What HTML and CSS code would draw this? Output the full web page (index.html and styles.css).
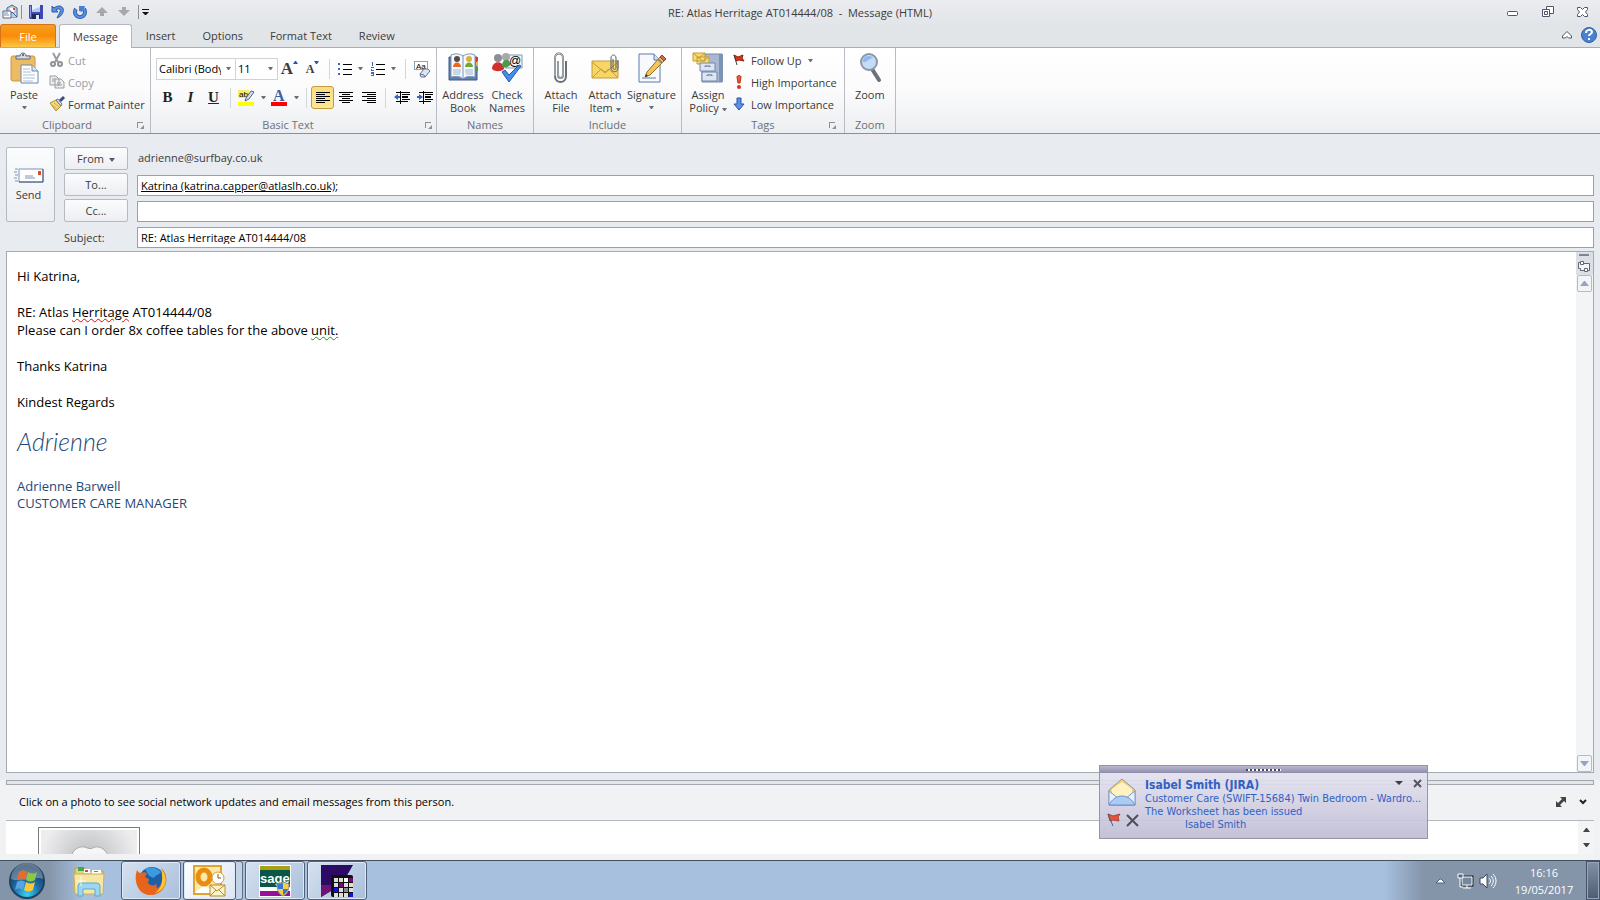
FILE: index.html
```html
<!DOCTYPE html>
<html lang="en">
<head>
    <meta charset="UTF-8">
    <meta name="viewport" content="width=device-width, initial-scale=1.0">
    <title>RE: Atlas Herritage AT014444/08 - Message (HTML)</title>
    <link rel="stylesheet" href="styles.css">
</head>
<body>
    <header class="titlebar">
        <div class="quick">
            <svg class="app-icon" width="16" height="16" viewBox="0 0 16 16"><path d="M5 4l5-3 5 3v9H5z" fill="#dfe9f5" stroke="#3d5d86"/><path d="M7 3h6v6H7z" fill="#fff" stroke="#8ba3c0"/><path d="M5 13l5-5 5 5" fill="#b9cfe8" stroke="#3d5d86"/><path d="M1 7h8v7H1z" fill="#fff" stroke="#56677e"/><path d="M2 9h4M2 11h5" stroke="#6c8db8"/><path d="M11 4h2v2h-2z" fill="#d9533a"/></svg>
            <i class="bar"></i>
            <button class="tool" aria-label="Save"><svg width="14" height="14" viewBox="0 0 14 14"><path d="M0 0h14v14H1l-1-1z" fill="#3f49b5"/><path d="M1 1h1v11H1z" fill="#8f9bf0"/><path d="M3 0h8v7H3z" fill="#e9effb"/><path d="M3 5l8-3v5H3z" fill="#b4c8ec"/><path d="M3 9h8v5H3z" fill="#23285c"/><path d="M7 10h3v4H7z" fill="#dfe4f4"/></svg></button>
            <button class="tool" aria-label="Undo"><svg width="14" height="14" viewBox="0 0 14 14"><path d="M1 1v6h6L5 5c3-2 5-1 4 2l-3 6c7-2 9-12 2-12-2 0-4 1-5 2z" fill="#5c8fdc" stroke="#2b5cb0"/></svg></button>
            <button class="tool" aria-label="Redo"><svg width="14" height="14" viewBox="0 0 14 14"><path d="M3 4a5 5 0 1 0 8 0" fill="none" stroke="#2b5cb0" stroke-width="4"/><path d="M3 4a5 5 0 1 0 8 0" fill="none" stroke="#5c93e2" stroke-width="2"/><path d="M6 1h6l-1 3-2 3-3-1z" fill="#4a80d2"/></svg></button>
            <button class="tool" aria-label="Previous item"><svg width="12" height="10" viewBox="0 0 12 10"><path d="M6 0l6 6H8v3H4V6H0z" fill="#a5a8ad"/></svg></button>
            <button class="tool" aria-label="Next item"><svg width="12" height="10" viewBox="0 0 12 10"><path d="M6 9l6-6H8V0H4v3H0z" fill="#a5a8ad"/></svg></button>
            <i class="bar"></i>
            <button class="tool narrow" aria-label="Customize toolbar"><svg width="7" height="7" viewBox="0 0 7 7"><path d="M0 0h7v1H0zM0 3h7L4 6H3z" fill="#111"/></svg></button>
        </div>
        <h1 class="title">RE: Atlas Herritage AT014444/08 &nbsp;-&nbsp; Message (HTML)</h1>
        <div class="window-buttons">
            <button aria-label="Minimize"><svg width="12" height="12" viewBox="0 0 12 12"><rect x=".5" y="5.500" width="10" height="4" rx="1" fill="#fff" stroke="#50566a"/></svg></button>
            <button aria-label="Restore"><svg width="12" height="12" viewBox="0 0 12 12"><path d="M4.500.500h7v7h-7z" fill="#fff" stroke="#50566a"/><path d="M.500 3.500h7v7h-7z" fill="#fff" stroke="#50566a"/><path d="M2.500 5.500h3v3h-3z" fill="#fff" stroke="#50566a"/></svg></button>
            <button aria-label="Close"><svg width="12" height="12" viewBox="0 0 12 12"><path d="M.500 1.500h3l2 2 2-2h3v2l-2 2.500 2 2.500v2h-3l-2-2-2 2h-3v-2l2-2.500-2-2.500z" fill="#fff" stroke="#50566a"/></svg></button>
        </div>
    </header>

    <nav class="tabs">
        <button class="tab file">File</button>
        <button class="tab active">Message</button>
        <button class="tab">Insert</button>
        <button class="tab">Options</button>
        <button class="tab">Format Text</button>
        <button class="tab">Review</button>
        <div class="tab-tools">
            <button class="tool" aria-label="Minimize the ribbon"><svg width="10" height="8" viewBox="0 0 10 8"><path d="M5 .500L9.500 5v2H6.500L5 5.500 3.500 7H.500V5z" fill="#fff" stroke="#50566a"/></svg></button>
            <button class="tool" aria-label="Help"><svg width="16" height="16" viewBox="0 0 16 16"><circle cx="8" cy="8" r="7.500" fill="#4a82d0" stroke="#2f5fae"/><path d="M5 6c0-4 6-4 6-1 0 2-3 2-3 4M8 11v2" fill="none" stroke="#fff" stroke-width="2"/></svg></button>
        </div>
    </nav>

    <section class="ribbon">
        <div class="group clipboard">
            <div class="group-body">
                <button class="big">
                    <svg width="32" height="32" viewBox="0 0 32 32"><rect x="3" y="4" width="24" height="25" rx="2" fill="#edbb63" stroke="#c8954a"/><path d="M8 7V4h4c0-4 6-4 6 0h4v3z" fill="#d5dae0" stroke="#5f6874"/><circle cx="15" cy="3" r="1" fill="#4a515c"/><path d="M13 13h11l6 6v12H13z" fill="#fff" stroke="#6a86b2"/><path d="M24 13v6h6" fill="#dbe5f3" stroke="#6a86b2"/><path d="M15 17h7M15 20h8M15 23h12M15 26h12M15 29h10" stroke="#a9bcd8"/></svg>
                    <span>Paste</span>
                    <svg class="arrow" width="5" height="3"><path d="M0 0h5L3 3H2z"/></svg>
                </button>
                <div class="small-list">
                    <button class="small" disabled><svg width="16" height="16" viewBox="0 0 16 16"><path d="M4 1l5 9M11 1L6 10" stroke="#9a9da2" stroke-width="2"/><circle cx="4" cy="12" r="2" fill="none" stroke="#8e9196" stroke-width="2"/><circle cx="11" cy="12" r="2" fill="none" stroke="#8e9196" stroke-width="2"/></svg>Cut</button>
                    <button class="small" disabled><svg width="16" height="16" viewBox="0 0 16 16"><path d="M1 2h6l3 3v6H1zM6 5h6l3 3v6H6z" fill="#eceef0" stroke="#9a9da2"/><path d="M3 5h3M3 7h3M8 9h4M8 11h5" stroke="#9a9da2"/></svg>Copy</button>
                    <button class="small"><svg width="16" height="16" viewBox="0 0 16 16"><path d="M1 7l6-3 5 6-5 5z" fill="#f4dc7c" stroke="#b08a32"/><path d="M3 9l5 4M5 7l5 4" stroke="#caa548"/><path d="M7 4l2-1 4 5-1 2z" fill="#dfe4ec" stroke="#6a7180"/><path d="M11 5l4-4" stroke="#3d4a86" stroke-width="3"/></svg>Format Painter</button>
                </div>
            </div>
            <div class="group-name">Clipboard<button class="launcher" aria-label="Clipboard options"><svg width="7" height="7"><path d="M0 0h6v1H1v5H0zM3 3l3 3M7 3v4H3z" fill="#8a8f98"/></svg></button></div>
        </div>

        <div class="group basic">
            <div class="group-body stacked">
                <div class="row">
                    <label class="combo font"><select aria-label="Font"><option>Calibri (Body)</option></select><svg class="arrow" width="5" height="3"><path d="M0 0h5L3 3H2z"/></svg></label>
                    <label class="combo size"><select aria-label="Font size"><option>11</option></select><svg class="arrow" width="5" height="3"><path d="M0 0h5L3 3H2z"/></svg></label>
                    <button class="tool grow" aria-label="Grow font"><span>A</span><svg width="5" height="3"><path d="M0 3h5L3 0H2z" fill="#2f55a0"/></svg></button>
                    <button class="tool shrink" aria-label="Shrink font"><span>A</span><svg width="5" height="3"><path d="M0 0h5L3 3H2z" fill="#2f55a0"/></svg></button>
                    <i class="sep"></i>
                    <button class="tool split" aria-label="Bullets"><svg width="14" height="14" viewBox="0 0 14 14"><path d="M0 1h2v2H0zM0 6h2v2H0zM0 11h2v2H0z" fill="#3d68b8"/><path d="M5 2h9v1H5zM5 7h9v1H5zM5 12h9v1H5z"/></svg><svg class="arrow" width="5" height="3"><path d="M0 0h5L3 3H2z"/></svg></button>
                    <button class="tool split" aria-label="Numbering"><svg width="14" height="14" viewBox="0 0 14 14"><path d="M1 0h1v4H1zM0 5h3v1H2v1H1v1h2v1H0V7h2V6H0zM0 10h3v4H0v-1h2v-1H0z" fill="#3d68b8"/><path d="M5 2h9v1H5zM5 7h9v1H5zM5 12h9v1H5z"/></svg><svg class="arrow" width="5" height="3"><path d="M0 0h5L3 3H2z"/></svg></button>
                    <i class="sep"></i>
                    <button class="tool" aria-label="Clear formatting"><svg width="16" height="16" viewBox="0 0 16 16"><rect x=".5" y=".5" width="13" height="8" fill="#fff" stroke="#8fa3c2"/><text x="2" y="8" class="ico-text">Aa</text><path d="M6 13l4-5h4l2 2-5 6H7z" fill="#dde6f4" stroke="#5f7396"/><path d="M6 13l4 1 1 2" fill="none" stroke="#5f7396"/></svg></button>
                </div>
                <div class="row">
                    <button class="tool letter b">B</button>
                    <button class="tool letter i">I</button>
                    <button class="tool letter u">U</button>
                    <i class="sep"></i>
                    <button class="tool split" aria-label="Highlight"><svg width="17" height="17" viewBox="0 0 17 17"><path d="M0 1h11v8H0z" fill="#f5f06a"/><text x="1" y="8" class="ico-text">ab</text><path d="M8 9l5-7 3 1-5 7-4 2z" fill="#cfdcf0" stroke="#47679c"/><path d="M0 13h16v4H0z" fill="#ff0"/></svg><svg class="arrow" width="5" height="3"><path d="M0 0h5L3 3H2z"/></svg></button>
                    <button class="tool split" aria-label="Font color"><svg width="17" height="17" viewBox="0 0 17 17"><text x="2" y="12" class="ico-a">A</text><path d="M0 13h16v4H0z" fill="#f00"/></svg><svg class="arrow" width="5" height="3"><path d="M0 0h5L3 3H2z"/></svg></button>
                    <i class="sep"></i>
                    <button class="tool on" aria-label="Align left"><svg width="14" height="11"><path d="M0 0h14v1H0zM0 2h9v1H0zM0 4h14v1H0zM0 6h9v1H0zM0 8h14v1H0zM0 10h9v1H0z"/></svg></button>
                    <button class="tool" aria-label="Center"><svg width="14" height="11"><path d="M0 0h14v1H0zM3 2h8v1H3zM0 4h14v1H0zM3 6h8v1H3zM0 8h14v1H0zM3 10h8v1H3z"/></svg></button>
                    <button class="tool" aria-label="Align right"><svg width="14" height="11"><path d="M0 0h14v1H0zM5 2h9v1H5zM0 4h14v1H0zM5 6h9v1H5zM0 8h14v1H0zM5 10h9v1H5z"/></svg></button>
                    <i class="sep"></i>
                    <button class="tool" aria-label="Decrease indent"><svg width="16" height="13"><path d="M2 1h14v1H2zM8 3h8v1H8zM8 5h6v2H8zM8 8h8v1H8zM2 10h12v1H2zM6 0h1v13H6z"/><path d="M0 6l4-3v2h2v2H4v2z" fill="#3566b8"/></svg></button>
                    <button class="tool" aria-label="Increase indent"><svg width="16" height="13"><path d="M2 1h14v1H2zM8 3h8v1H8zM8 5h6v2H8zM8 8h8v1H8zM2 10h12v1H2zM6 0h1v13H6z"/><path d="M6 6L2 3v2H0v2h2v2z" fill="#3566b8"/></svg></button>
                </div>
            </div>
            <div class="group-name">Basic Text<button class="launcher" aria-label="Text options"><svg width="7" height="7"><path d="M0 0h6v1H1v5H0zM3 3l3 3M7 3v4H3z" fill="#8a8f98"/></svg></button></div>
        </div>

        <div class="group">
            <div class="group-body">
                <button class="big">
                    <svg width="32" height="32" viewBox="0 0 32 32"><path d="M2 5h28v23H2z" fill="#5f7fae" stroke="#3f5b86"/><path d="M4 3c5-2 9-1 12 1 3-2 7-3 12-1v22c-5-1-9-1-12 2-3-3-7-3-12-2z" fill="#f5f8fc" stroke="#7a93b8"/><path d="M16 4v23" stroke="#7a93b8"/><path d="M29 5h2v4h-2z" fill="#d33"/><path d="M29 10h2v4h-2z" fill="#e8b43c"/><path d="M29 15h2v4h-2z" fill="#4a9a3c"/><circle cx="10" cy="7" r="3" fill="#5a4a44"/><path d="M6 15c0-6 8-6 8 0z" fill="#e56a24"/><circle cx="22" cy="7" r="3" fill="#d8b23c"/><path d="M18 15c0-6 8-6 8 0z" fill="#6aa83a"/><path d="M6 18h8M6 20h8M6 22h7M18 18h8M18 20h8M19 22h7" stroke="#9fb2cf"/></svg>
                    <span>Address<br>Book</span>
                </button>
                <button class="big">
                    <svg width="32" height="32" viewBox="0 0 32 32"><path d="M14 3h17v13H14z" fill="#f4f7fb" stroke="#8096b8"/><circle cx="7" cy="6" r="4" fill="#8c8f96"/><path d="M1 17c0-9 12-9 12 0-3 3-9 3-12 0z" fill="#cf3030"/><circle cx="15" cy="5" r="4" fill="#a5a8ad"/><path d="M11 14c0-8 9-8 8-1-2 3-6 3-8 1z" fill="#4b9a48"/><text x="18" y="13" class="ico-at">@</text><path d="M11 20l3-2 4 5L28 13l2 1-12 16z" fill="#4b8ce6" stroke="#2359b4"/></svg>
                    <span>Check<br>Names</span>
                </button>
            </div>
            <div class="group-name">Names</div>
        </div>

        <div class="group wide">
            <div class="group-body">
                <button class="big">
                    <svg width="32" height="32" viewBox="0 0 32 32"><path d="M13 9v14c0 4 5 4 5 0V6c0-6-8-6-8 0v18c0 8 11 8 11 0V9" fill="none" stroke="#6a6f77" stroke-width="2"/><path d="M13 9v14c0 4 5 4 5 0V6c0-6-8-6-8 0v18" fill="none" stroke="#c5c9cf" stroke-width="1"/></svg>
                    <span>Attach<br>File</span>
                </button>
                <button class="big">
                    <svg width="32" height="32" viewBox="0 0 32 32"><path d="M3 9h26v17H3z" fill="#f8d567" stroke="#c79a35"/><path d="M3 26l9-9 4 3 4-3 9 9M3 10l13 11 13-11" fill="none" stroke="#c79a35"/><path d="M24 7v9c0 2 3 2 3 0V6c0-4-5-4-5 0v10c0 5 7 5 7 0V8" fill="none" stroke="#4f5f78"/></svg>
                    <span>Attach<br>Item <svg class="arrow" width="5" height="3"><path d="M0 0h5L3 3H2z"/></svg></span>
                </button>
                <button class="big">
                    <svg width="32" height="32" viewBox="0 0 32 32"><path d="M4 2h15l6 6v22H4z" fill="#f7f9fd" stroke="#5a78b0"/><path d="M19 2v6h6" fill="#d6e0f0" stroke="#5a78b0"/><path d="M7 26h14" stroke="#5a78b0"/><path d="M12 20L25 5l4 4-14 14-5 2z" fill="#f3c556" stroke="#946d23"/><path d="M25 5l2-2 4 4-2 2z" fill="#d8675a" stroke="#8f4038"/><path d="M23 7l4 4" stroke="#888" stroke-width="2"/><path d="M10 25l1-3 2 2z" fill="#333"/></svg>
                    <span>Signature</span>
                    <svg class="arrow" width="5" height="3"><path d="M0 0h5L3 3H2z"/></svg>
                </button>
            </div>
            <div class="group-name">Include</div>
        </div>

        <div class="group tags">
            <div class="group-body">
                <button class="big">
                    <svg width="32" height="32" viewBox="0 0 32 32"><path d="M13 2h17v28H10V11h3z" fill="#a8b8d0" stroke="#7288aa"/><path d="M27 2h4v28h-4z" fill="#7d93b5"/><path d="M1 1h12v8H1zM5 5h12v7H5z" fill="#f8dc70" stroke="#c49b36"/><path d="M1 1l6 5 6-5M5 5l6 4 6-4" fill="none" stroke="#c49b36"/><path d="M8 11h15v8H8zM10 20h15v9H10z" fill="#dce5f1" stroke="#7288aa"/><path d="M13 15v-1h5v1M15 24v-1h5v1" fill="none" stroke="#56698c"/></svg>
                    <span>Assign<br>Policy <svg class="arrow" width="5" height="3"><path d="M0 0h5L3 3H2z"/></svg></span>
                </button>
                <div class="small-list">
                    <button class="small"><svg width="12" height="14" viewBox="0 0 12 14"><path d="M1 2l4 2 5-2-1 3 2 3-5-1-3 1z" fill="#d8341c" stroke="#96200f"/><path d="M1 2l3 10" stroke="#444"/></svg><span>Follow Up</span><svg class="arrow" width="5" height="3"><path d="M0 0h5L3 3H2z"/></svg></button>
                    <button class="small"><svg width="12" height="14" viewBox="0 0 12 14"><path d="M4 2c0-2 4-2 4 0L7 8H5z" fill="#ea5a3c" stroke="#b8301a"/><circle cx="6" cy="12" r="2" fill="#d8341c"/></svg><span>High Importance</span></button>
                    <button class="small"><svg width="12" height="14" viewBox="0 0 12 14"><path d="M4 1h4v6h3l-5 6-5-6h3z" fill="#5b91ea" stroke="#2553a8"/></svg><span>Low Importance</span></button>
                </div>
            </div>
            <div class="group-name">Tags<button class="launcher" aria-label="Tag options"><svg width="7" height="7"><path d="M0 0h6v1H1v5H0zM3 3l3 3M7 3v4H3z" fill="#8a8f98"/></svg></button></div>
        </div>

        <div class="group zoom">
            <div class="group-body">
                <button class="big">
                    <svg width="32" height="32" viewBox="0 0 32 32"><path d="M18 17l7 11" stroke="#6c7077" stroke-width="4" stroke-linecap="round"/><circle cx="15" cy="10" r="8" fill="#c5dcf6" stroke="#8b97a8" stroke-width="2"/><path d="M9 10c0-7 8-7 10-4-4 0-6 5-10 4z" fill="#8fb8ec"/></svg>
                    <span>Zoom</span>
                </button>
            </div>
            <div class="group-name">Zoom</div>
        </div>
    </section>

    <form class="envelope">
        <button type="button" class="btn send"><svg width="30" height="16" viewBox="0 0 30 16"><path d="M5 1h24v13H5z" fill="#fff" stroke="#7b93b8"/><path d="M29 1v13H5" fill="none" stroke="#3f587f"/><path d="M24 3h3v4h-3z" fill="#dc4a2a"/><path d="M11 8h8M11 10h10" stroke="#7b93b8"/><path d="M1 1h3M0 4h3M1 7h3M0 10h3M1 13h3" stroke="#7b93b8"/></svg>Send</button>
        <button type="button" class="btn">From <svg class="arrow" width="6" height="4"><path d="M0 0h6L3 4z"/></svg></button>
        <span class="from">adrienne@surfbay.co.uk</span>
        <button type="button" class="btn">To...</button>
        <div class="field"><span class="recipient">Katrina (katrina.capper@atlaslh.co.uk)</span>;<input type="text" aria-label="To"></div>
        <button type="button" class="btn">Cc...</button>
        <div class="field"><input type="text" aria-label="Cc"></div>
        <label for="subject">Subject:</label>
        <div class="field"><input type="text" id="subject" value="RE: Atlas Herritage AT014444/08"></div>
    </form>

    <main class="editor">
        <div class="message" contenteditable="true" role="textbox" aria-label="Message body" spellcheck="false">
            <p>Hi Katrina,</p>
            <p><br></p>
            <p>RE: Atlas <span class="spelling">Herritage</span> AT014444/08</p>
            <p>Please can I order 8x coffee tables for the above <span class="grammar">unit.</span></p>
            <p><br></p>
            <p>Thanks Katrina</p>
            <p><br></p>
            <p>Kindest Regards</p>
            <p class="signature">Adrienne</p>
            <p class="job">Adrienne Barwell</p>
            <p class="job">CUSTOMER CARE MANAGER</p>
        </div>
        <div class="scroll">
            <div class="ruler"><svg width="12" height="20" viewBox="0 0 12 20"><path d="M1 1h10v2H1z" fill="#7e8590"/><path d="M.500 9.500h4l1 1h6v7h-9v-2h-2z" fill="#f5f3f6" stroke="#62666e"/><path d="M2.500 8.500h3v3h-3zM6.500 15.500h3v3h-3z" fill="#fff" stroke="#62666e"/></svg></div>
            <button class="scroll-btn" aria-label="Scroll up"><svg width="9" height="5"><path d="M0 5h9L5 0H4z" fill="#93a4cb"/></svg></button>
            <div class="track"></div>
            <button class="scroll-btn" aria-label="Scroll down"><svg width="9" height="5"><path d="M0 0h9L5 5H4z" fill="#93a4cb"/></svg></button>
        </div>
    </main>

    <section class="people">
        <div class="splitter"></div>
        <div class="people-head">
            <span>Click on a photo to see social network updates and email messages from this person.</span>
            <button class="tool" aria-label="Expand"><svg width="10" height="10" viewBox="0 0 10 10"><path d="M4 0h6v6L8 4 4 8l2 2H0V4l2 2 4-4z" fill="#444"/></svg></button>
            <button class="tool" aria-label="Collapse"><svg width="8" height="5" viewBox="0 0 8 5"><path d="M1 1l3 3 3-3" fill="none" stroke="#222" stroke-width="2"/></svg></button>
        </div>
        <div class="people-list">
            <div class="photo"><svg width="96" height="27" viewBox="0 0 96 27"><path d="M30 27c2-8 8-11 14-10 4 2 6 2 10 0 6-1 11 3 14 10" fill="#f6f6f6" stroke="#a5a7aa"/></svg></div>
            <div class="mini-scroll"><svg width="7" height="4"><path d="M0 4h7L4 0H3z"/></svg><svg width="7" height="4"><path d="M0 0h7L4 4H3z"/></svg></div>
        </div>
    </section>

    <footer class="taskbar">
        <button class="start" aria-label="Start"><svg width="38" height="38" viewBox="0 0 38 38"><defs><radialGradient id="orb" cx=".5" cy=".9" r=".8"><stop offset="0" stop-color="#38d0f4"/><stop offset=".5" stop-color="#1c6ea6"/><stop offset="1" stop-color="#17385e"/></radialGradient></defs><circle cx="19" cy="19" r="17" fill="url(#orb)" stroke="#22415f" stroke-width="2"/><path d="M3 17a16 16 0 0 1 32 0c-10-4-22 4-32 0z" fill="#fff" opacity=".3"/><path d="M11 10c3-2 5-2 8 0l-2 8c-3-2-5-2-8 0z" fill="#ec6a2c"/><path d="M20 10c3 2 6 2 9 0l-2 8c-3 2-6 2-9 0z" fill="#8fc740"/><path d="M9 20c3-2 5-2 8 0l-2 8c-3-2-5-2-8 0z" fill="#57a4e4"/><path d="M18 20c3 2 6 2 9 0l-2 8c-3 2-6 2-9 0z" fill="#fbc73a"/></svg></button>
        <button class="pin" aria-label="Windows Explorer"><svg width="32" height="32" viewBox="0 0 32 32"><path d="M2 3h10l2 3h16v22H2z" fill="#e8cf78" stroke="#c0a04a"/><path d="M5 2h6v4H5z" fill="#3faa4a"/><path d="M11 4h6v4h-6z" fill="#fff"/><path d="M12 5h3v2h-3z" fill="#d44"/><path d="M19 5h9v4h-9z" fill="#fff"/><path d="M21 6h4v1h-4z" fill="#48c"/><path d="M1 9h30l-1 20H2z" fill="#f7e7a2" stroke="#cdb05c"/><path d="M5 31v-9c0-3 1-4 4-4h14c3 0 4 1 4 4v9h-5v-7H10v7z" fill="#9dd6f2" stroke="#5aa9d4"/><path d="M8 11v10M3 16h10" stroke="#fff" opacity=".8"/></svg></button>
        <button class="task" aria-label="Firefox"><svg width="32" height="32" viewBox="0 0 32 32"><circle cx="17" cy="15" r="13" fill="#1f5fa8"/><path d="M10 4c6-3 12-1 16 3-2 3-6 3-7 6-3-2-5-1-6-4z" fill="#3c9ade"/><path d="M2 5c1 2 2 3 4 3 2-1 4-1 6 0l-2 4 4 2-1 4c2 3 6 3 9 1-3 7 5 4 6-6 1-5-1-9-3-11 8 6 8 16 3 22-6 8-19 8-24 0C0 18 0 11 2 5z" fill="#e8641c"/><path d="M26 4c6 6 6 14 2 19-3 4-8 5-8 5 6-4 9-12 6-24z" fill="#fbc52f"/></svg></button>
        <button class="task outlook" aria-label="Outlook"><svg width="32" height="32" viewBox="0 0 32 32"><path d="M1 1h27v28H1z" fill="#fbe8ab" stroke="#e0a32c" stroke-width="2"/><path d="M2 27l9-6 16 7H2z" fill="#fff"/><ellipse cx="11" cy="12" rx="6" ry="7" fill="none" stroke="#e88d12" stroke-width="5"/><circle cx="25" cy="13" r="6" fill="#fff" stroke="#dc9a2c"/><path d="M25 9v4h3" fill="none" stroke="#7b5a20"/><path d="M17 20h15v11H17z" fill="#fdf3c8" stroke="#b98b2c"/><path d="M17 20l7 6 8-6M17 31l6-6M32 31l-6-6" fill="none" stroke="#b98b2c"/></svg></button>
        <i class="stack"></i>
        <button class="task" aria-label="Sage"><svg width="32" height="32" viewBox="0 0 32 32"><path d="M0 0h32v32H0z" fill="#fff"/><path d="M1 1h30v4H1z" fill="#a8a210"/><path d="M1 5h30v17H1z" fill="#0b5747"/><path d="M1 26h30v5H1z" fill="#96109a"/><text x="1" y="18" class="ico-sage">sage</text><path d="M18 19l6-2 6 2c0 7-2 10-6 12-4-2-6-5-6-12z" fill="#f7ce46" stroke="#8796a8"/><path d="M24 18v6h-5l-1-5zM24 24h5c-1 3-3 5-5 6z" fill="#3a78c8"/></svg></button>
        <button class="task" aria-label="Database"><svg width="32" height="32" viewBox="0 0 32 32"><path d="M0 0h32l-8 14-14 2v10L0 32z" fill="#2c0a66"/><path d="M0 20h10v6L0 32z" fill="#6b1474"/><rect x="10" y="10" width="22" height="22" rx="2" fill="#111"/><path d="M13 13h4v4h-4zM18 13h4v4h-4zM13 18h4v4h-4zM23 18h4v4h-4zM28 18h4v4h-4zM18 23h4v4h-4zM28 23h4v4h-4zM13 28h4v4h-4zM18 28h4v4h-4zM23 28h4v4h-4z" fill="#ddd"/><path d="M23 13h4v4h-4z" fill="#fff"/><path d="M28 13h4v4h-4zM18 18h4v4h-4z" fill="#7a0a7c"/><path d="M13 23h4v4h-4zM28 28h4v4h-4z" fill="#11e"/><path d="M23 23h4v4h-4z" fill="#888"/></svg></button>
        <div class="tray">
            <button class="tool" aria-label="Show hidden icons"><svg width="9" height="6"><path d="M0 5h9L5 1H4z" fill="#fff" stroke="#52617a"/></svg></button>
            <svg width="18" height="18" viewBox="0 0 18 18"><path d="M6 5h10v8H6z" fill="#7688a0" stroke="#1f2a3a" stroke-width="3"/><path d="M6 5h10v8H6z" fill="#7688a0" stroke="#fff"/><path d="M11 13v3M7 16h8" stroke="#fff"/><path d="M2 2h5v4H2zM4 6v9h3" fill="#56667c" stroke="#fff"/></svg>
            <svg width="18" height="18" viewBox="0 0 18 18"><path d="M1 6h3l4-4v14l-4-4H1z" fill="#fff" stroke="#3a4960"/><path d="M10 6c2 2 2 4 0 6M12 4c3 3 3 7 0 10M14 2c4 4 4 10 0 14" fill="none" stroke="#fff"/></svg>
            <div class="clock"><div>16:16</div><div>19/05/2017</div></div>
        </div>
        <button class="desktop" aria-label="Show desktop"></button>
    </footer>

    <aside class="toast">
        <div class="grip"><i></i></div>
        <div class="toast-body">
            <div class="toast-icons">
                <svg width="30" height="30" viewBox="0 0 30 30"><path d="M2 12L15 1l13 11v15H2z" fill="#f8d070" stroke="#8a97b4"/><path d="M5 11L15 4l10 7v8H5z" fill="#fff3c4"/><path d="M2 13l9 7h8l9-7v14H2z" fill="#e6f1fd" stroke="#7e98c8"/><path d="M2 27c6-12 20-12 26 0z" fill="#a9cbf4" stroke="#6f90c8"/></svg>
                <div class="toast-actions">
                    <button class="tool" aria-label="Flag"><svg width="14" height="14" viewBox="0 0 14 14"><path d="M1 1l5 2 7-2-2 3 1 4-6-1-3 1z" fill="#e2543c" stroke="#b04038"/><path d="M1 1l5 12" stroke="#555d7a"/></svg></button>
                    <button class="tool" aria-label="Delete"><svg width="13" height="13" viewBox="0 0 13 13"><path d="M1 1l11 11M12 1L1 12" stroke="#4e4e58" stroke-width="2"/></svg></button>
                </div>
            </div>
            <a class="toast-text" href="#">
                <strong>Isabel Smith (JIRA)</strong>
                <span>Customer Care (SWIFT-15684) Twin Bedroom - Wardro...</span>
                <span>The Worksheet has been issued</span>
                <span class="from-line">Isabel Smith</span>
            </a>
            <div class="toast-tools">
                <button class="tool" aria-label="Options"><svg width="8" height="4"><path d="M0 0h8L4 4z" fill="#3d3d48"/></svg></button>
                <button class="tool" aria-label="Close alert"><svg width="9" height="9" viewBox="0 0 9 9"><path d="M1 1l7 7M8 1L1 8" stroke="#55555f" stroke-width="2"/></svg></button>
            </div>
        </div>
    </aside>
</body>
</html>
```

FILE: styles.css
```css
* {
    box-sizing: border-box;
}
body {
    margin: 0;
    height: 100vh;
    display: flex;
    flex-direction: column;
    overflow: hidden;
    position: relative;
    font-family: "Open Sans", "Noto Sans", sans-serif;
    font-size: 11px;
    line-height: 13px;
    color: #3b3b3b;
    background-color: #e8ebf0;
}
button {
    font: inherit;
    color: inherit;
    border: none;
    background: none;
    padding: 0;
    margin: 0;
}
input, select {
    font: inherit;
    color: #000;
    border: none;
    outline: none;
    background: none;
    padding: 0;
    min-width: 0;
}
svg {
    flex: none;
    overflow: visible;
}
.tool {
    display: flex;
    align-items: center;
    justify-content: center;
    min-width: 22px;
    height: 22px;
}
.arrow {
    fill: #6b6f76;
}

/* Title bar */
.titlebar {
    display: grid;
    grid-template-columns: 1fr auto 1fr;
    align-items: center;
    height: 24px;
    background: linear-gradient(#ebecf0, #e2e5e9);
}
.quick {
    display: flex;
    align-items: center;
    padding-left: 2px;
}
.bar {
    width: 1px;
    height: 14px;
    margin: 0 3px;
    background-color: #8b8f96;
}
.quick .narrow {
    min-width: 7px;
}
.title {
    margin: 0;
    font-size: 11px;
    font-weight: normal;
}
.window-buttons {
    display: flex;
    justify-content: flex-end;
    gap: 23px;
    padding-right: 11px;
}
.window-buttons svg {
    display: block;
}

/* Ribbon tabs */
.tabs {
    display: flex;
    gap: 1px;
    height: 24px;
    background-color: #e1e5e8;
    border-bottom: 1px solid #a9aeb5;
}
.tab {
    height: 23px;
    padding: 0 13px;
}
.tab.file {
    width: 56px;
    margin-right: 2px;
    color: #fff;
    border: 1px solid #d9731a;
    border-bottom: none;
    border-radius: 3px 3px 0 0;
    background: linear-gradient(#f5a01d, #f98c08 50%, #fdc744);
}
.tab.active {
    height: 24px;
    border: 1px solid #b3b8be;
    border-bottom: none;
    border-radius: 3px 3px 0 0;
    background-color: #fff;
}
.tab-tools {
    display: flex;
    margin-left: auto;
}

/* Ribbon groups */
.ribbon {
    display: flex;
    height: 86px;
    background: linear-gradient(#fff, #fbfbfc 50%, #eceef1);
    border-bottom: 1px solid #8b9097;
}
.group {
    display: flex;
    flex-direction: column;
    padding: 0 4px;
    border-right: 1px solid #b9bdc3;
}
.clipboard {
    width: 151px;
    padding: 0 2px;
}
.basic {
    width: 286px;
    padding: 0 0 0 5px;
}
.wide {
    padding: 0 5px;
}
.zoom {
    width: 51px;
}
.group-body {
    display: flex;
    flex: 1;
    padding-top: 1px;
}
.group-body.stacked {
    flex-direction: column;
    padding-top: 9px;
    gap: 6px;
}
.group-name {
    position: relative;
    height: 17px;
    line-height: 17px;
    text-align: center;
    color: #6a707b;
}
.clipboard .group-name, .basic .group-name {
    padding-right: 16px;
}
.launcher {
    position: absolute;
    right: 4px;
    top: 6px;
    line-height: 0;
}
.big {
    display: flex;
    flex-direction: column;
    align-items: center;
    min-width: 44px;
    padding-top: 3px;
}
.big > span {
    margin-top: 4px;
}
.big > .arrow {
    margin-top: 5px;
}
.big span .arrow {
    vertical-align: middle;
}
.zoom .big {
    min-width: 42px;
}
.small-list {
    display: flex;
    flex-direction: column;
}
.small {
    display: flex;
    align-items: center;
    gap: 3px;
    height: 22px;
    padding: 0 3px;
    white-space: nowrap;
}
.small:disabled {
    color: #9a9da2;
}
.tags .small {
    gap: 6px;
}
.row {
    display: flex;
    align-items: center;
    height: 23px;
}
.row .tool {
    min-width: 23px;
}
.combo {
    display: flex;
    align-items: center;
    gap: 5px;
    height: 22px;
    padding: 0 4px 0 2px;
    border: 1px solid #cfd2d7;
    background-color: #fff;
}
.combo select {
    flex: 1;
    appearance: none;
}
.combo.font {
    width: 80px;
}
.combo.size {
    width: 43px;
    margin-left: -1px;
}
.grow, .shrink {
    align-items: flex-start;
    font-family: "Liberation Serif", serif;
    font-weight: bold;
    line-height: 22px;
}
.grow {
    font-size: 17px;
}
.shrink {
    font-size: 12px;
}
.grow svg, .shrink svg {
    margin-top: 3px;
}
.sep {
    width: 1px;
    height: 20px;
    margin: 0 4px 0 5px;
    background-color: #d3d6da;
}
.split {
    width: 33px;
    gap: 6px;
}
.letter {
    font-family: "Liberation Serif", serif;
    font-size: 15px;
    font-weight: bold;
    color: #222;
}
.letter.i {
    font-style: italic;
}
.letter.u {
    text-decoration: underline;
}
.on {
    height: 23px;
    border: 1px solid #c29a3f;
    border-radius: 3px;
    background: linear-gradient(#fbdc84, #fde88f);
}
.ico-text {
    font: 8px "Liberation Sans", sans-serif;
}
.ico-a {
    font: bold 16px "Liberation Serif", serif;
    fill: #3d5fa3;
}
.ico-at {
    font: 12px "Liberation Sans", sans-serif;
}
.ico-sage {
    font: bold 13px "Liberation Sans", sans-serif;
    fill: #fff;
}

/* Address fields */
.envelope {
    display: grid;
    grid-template-columns: 49px 64px 1fr;
    grid-auto-rows: 23px;
    gap: 3px 9px;
    padding: 13px 6px 3px;
    align-items: end;
}
.btn {
    height: 23px;
    border: 1px solid #b5b9c0;
    border-radius: 2px;
    background: linear-gradient(#fbfcfd, #eceef2);
}
.btn .arrow {
    margin-left: 2px;
    vertical-align: middle;
    fill: #4d5b78;
}
.send {
    grid-row: span 3;
    display: flex;
    flex-direction: column;
    align-items: center;
    justify-content: center;
    gap: 4px;
    height: 75px;
    padding-right: 4px;
}
.envelope label {
    grid-column: 2;
    line-height: 21px;
}
.from {
    align-self: start;
    padding-left: 1px;
    line-height: 21px;
}
.field {
    display: flex;
    align-items: center;
    height: 21px;
    padding: 0 3px;
    border: 1px solid #9c9fa5;
    background-color: #fff;
    color: #000;
}
.field input {
    flex: 1;
}
.recipient {
    text-decoration: underline;
}

/* Message body */
.editor {
    flex: 1;
    display: flex;
    margin: 0 6px;
    min-height: 0;
    border: 1px solid #a3a9b5;
    background-color: #fff;
}
.message {
    flex: 1;
    padding: 15px 10px;
    outline: none;
    font-size: 13px;
    line-height: 18px;
    color: #000;
}
.message p {
    margin: 0;
}
.spelling {
    text-decoration: underline wavy #f00 1px;
}
.grammar {
    text-decoration: underline wavy #1a9a1a 1px;
}
.message .signature {
    margin: 15px 0 22px;
    font-family: Lato, sans-serif;
    font-size: 25px;
    font-weight: 300;
    font-style: italic;
    line-height: 30px;
    color: #1f497d;
}
.message .job {
    line-height: 17px;
    color: #1f497d;
}
.scroll {
    display: flex;
    flex-direction: column;
    width: 17px;
    background-color: #f3f4f6;
}
.ruler {
    height: 23px;
    padding: 1px 2px;
    background-color: #dbe0e8;
    line-height: 0;
}
.scroll-btn {
    display: flex;
    align-items: center;
    justify-content: center;
    height: 17px;
    margin: 0 1px;
    border: 1px solid #b7bac0;
    border-radius: 2px;
    background-color: #f3f4f6;
}
.track {
    flex: 1;
}

/* People pane */
.people {
    margin-top: 7px;
    padding: 0 6px 6px;
    background-color: #f1f2f4;
}
.splitter {
    height: 5px;
    border: 1px solid #a3a7af;
    background-color: #e3e5e9;
}
.people-head {
    display: flex;
    align-items: center;
    height: 35px;
    padding: 0 0 2px 13px;
    color: #000;
}
.people-head span {
    margin-right: auto;
}
.people-list {
    display: flex;
    justify-content: space-between;
    height: 34px;
    overflow: hidden;
    border-top: 1px solid #b4b8be;
    background-color: #fff;
}
.photo {
    width: 102px;
    height: 60px;
    margin: 6px 0 0 32px;
    padding: 2px;
    border: 1px solid #7b7b7b;
    background: radial-gradient(circle at 50% 30px, #b9bbbd, #ededee 48px) content-box;
}
.photo svg {
    display: block;
}
.mini-scroll {
    display: flex;
    flex-direction: column;
    align-items: center;
    justify-content: space-between;
    width: 16px;
    padding: 7px 0;
    background-color: #f3f4f6;
    fill: #444;
}

/* Taskbar */
.taskbar {
    display: flex;
    align-items: stretch;
    height: 40px;
    border-top: 1px solid #42505f;
    background: linear-gradient(90deg, #8494a9 48px, transparent 84px), linear-gradient(270deg, #8494a9 176px, #a7c0de 216px);
}
.taskbar svg {
    display: block;
}
.start {
    width: 54px;
}
.start svg {
    margin: 0 auto;
}
.pin {
    width: 64px;
    margin-right: 3px;
    padding-left: 19px;
}
.task {
    width: 60px;
    margin-right: 2px;
    padding: 0 13px;
    border: 1px solid #4f6078;
    border-radius: 3px;
    box-shadow: inset 0 0 0 1px #dfe9f5;
    background: linear-gradient(135deg, #d5e1f0, #a9bfdb);
}
.task.outlook {
    width: 53px;
    margin-right: 0;
    padding: 0 9px;
    background: linear-gradient(135deg, #fff, #dbe5f2);
}
.stack {
    width: 7px;
    margin-right: 2px;
    border: 1px solid #5f7088;
    border-left: none;
    border-radius: 0 3px 3px 0;
    background-color: #c3d3e7;
}
.tray {
    display: flex;
    align-items: center;
    gap: 5px;
    margin-left: auto;
}
.clock {
    width: 84px;
    font-size: 11px;
    line-height: 17px;
    text-align: center;
    color: #fff;
}
.desktop {
    width: 14px;
    border: 1px solid #45546a;
    box-shadow: inset 0 0 0 1px #97a5b8;
    background: linear-gradient(#8291a6, #4d5c70);
}

/* Mail alert above the taskbar */
.toast {
    position: absolute;
    right: 172px;
    bottom: 61px;
    width: 329px;
    border: 1px solid #9496a6;
    background: linear-gradient(rgba(232, 231, 242, 0.9), rgba(190, 187, 212, 0.9));
}
.grip {
    display: flex;
    align-items: center;
    justify-content: center;
    height: 7px;
    background: linear-gradient(#b9b8cf, #8e8cab);
}
.grip i {
    width: 35px;
    height: 2px;
    background: repeating-linear-gradient(90deg, #44445a 0 2px, #fff 2px 4px);
}
.toast-body {
    display: flex;
    height: 65px;
    padding: 5px 5px 0 7px;
}
.toast-icons {
    width: 38px;
}
.toast-icons > svg {
    display: block;
}
.toast-actions {
    display: flex;
    gap: 4px;
    padding-top: 1px;
}
.toast-actions .tool {
    min-width: 14px;
}
.toast-text {
    display: flex;
    flex-direction: column;
    width: 240px;
    padding-top: 1px;
    font-family: "DejaVu Sans Condensed", "DejaVu Sans", sans-serif;
    font-size: 11px;
    color: #3161c4;
    text-decoration: none;
    white-space: nowrap;
}
.toast-text strong {
    font-size: 12px;
}
.from-line {
    padding-left: 40px;
}
.toast-tools {
    display: flex;
    margin-left: auto;
    padding-top: 2px;
    gap: 10px;
}
.toast-tools .tool {
    min-width: 9px;
    height: 6px;
}
```
